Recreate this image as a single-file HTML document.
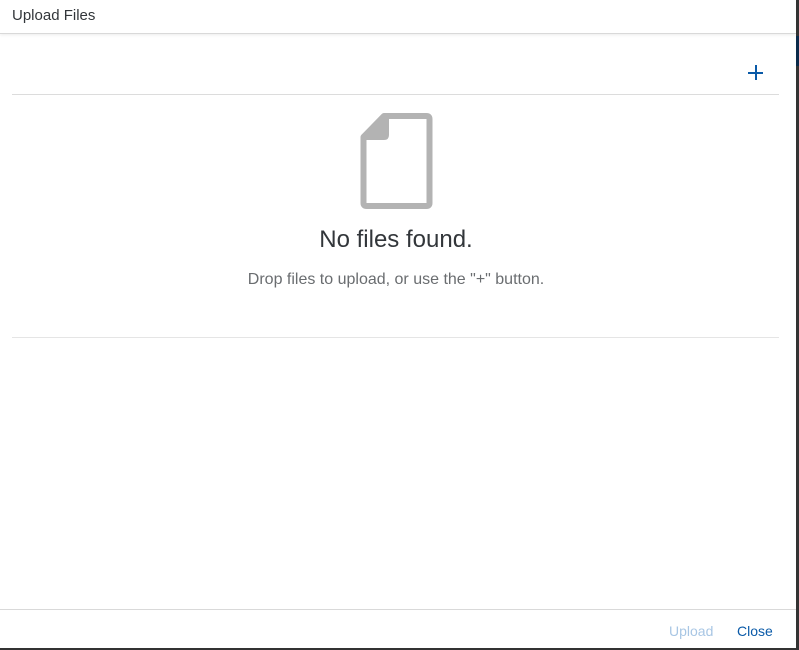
<!DOCTYPE html>
<html><head><meta charset="utf-8"><style>
html,body{margin:0;padding:0;width:799px;height:650px;overflow:hidden;background:#2b2b2b;font-family:"Liberation Sans",sans-serif;}
.dlg{position:absolute;left:0;top:0;width:796px;height:650px;background:#fff;}
.edge{position:absolute;left:796px;top:0;width:3px;height:650px;background:#333;}
.edge2{position:absolute;left:796px;top:36px;width:3px;height:30px;background:#0a2a4a;}
.hdr{position:absolute;left:0;top:0;width:796px;height:33px;border-bottom:1px solid #d9d9d9;box-shadow:0 1px 3px rgba(0,0,0,0.08);}
.title{position:absolute;left:12px;top:7px;font-size:15px;color:#32363a;}
.plus{position:absolute;left:748px;top:65px;width:16px;height:16px;}
.plus:before{content:"";position:absolute;left:0;top:7px;width:15px;height:2px;background:#0a5aa8;}
.plus:after{content:"";position:absolute;left:7px;top:0;width:2px;height:15px;background:#0a5aa8;}
.line1{position:absolute;left:12px;top:94px;width:767px;height:1px;background:#dcdcdc;}
.line2{position:absolute;left:12px;top:337px;width:767px;height:1px;background:#e5e5e5;}
.nf{position:absolute;left:0;width:792px;text-align:center;top:226px;font-size:24px;color:#32363a;}
.drop{position:absolute;left:0;width:792px;text-align:center;top:271px;font-size:16px;color:#6a6d70;}
.ftr{position:absolute;left:0;top:609px;width:796px;height:1px;background:#d9d9d9;}
.up{position:absolute;left:669px;top:623px;font-size:14px;color:#a8c6e4;}
.cl{position:absolute;left:737px;top:623px;font-size:14px;color:#0a5aa8;}
.bot{position:absolute;left:0;top:648px;width:799px;height:2px;background:#333;}
</style></head><body>
<div class="dlg">
<div class="hdr"><div class="title">Upload Files</div></div>
<div class="plus"></div>
<div class="line1"></div>
<svg style="position:absolute;left:340px;top:100px" width="120" height="120" viewBox="0 0 120 120">
<path d="M23.5 37 L44 16 L86.5 16 Q89.5 16 89.5 19 L89.5 103 Q89.5 106 86.5 106 L26.5 106 Q23.5 106 23.5 103 Z" fill="none" stroke="#b3b3b3" stroke-width="6" stroke-linejoin="round"/>
<path d="M20.5 37 L44 13 L49 13 L49 35 Q49 40 44 40 L20.5 40 Z" fill="#b3b3b3"/>
</svg>
<div class="nf">No files found.</div>
<div class="drop">Drop files to upload, or use the "+" button.</div>
<div class="line2"></div>
<div class="ftr"></div>
<div class="up">Upload</div>
<div class="cl">Close</div>
</div>
<div class="edge"></div><div class="edge2"></div>
<div class="bot"></div>
</body></html>
